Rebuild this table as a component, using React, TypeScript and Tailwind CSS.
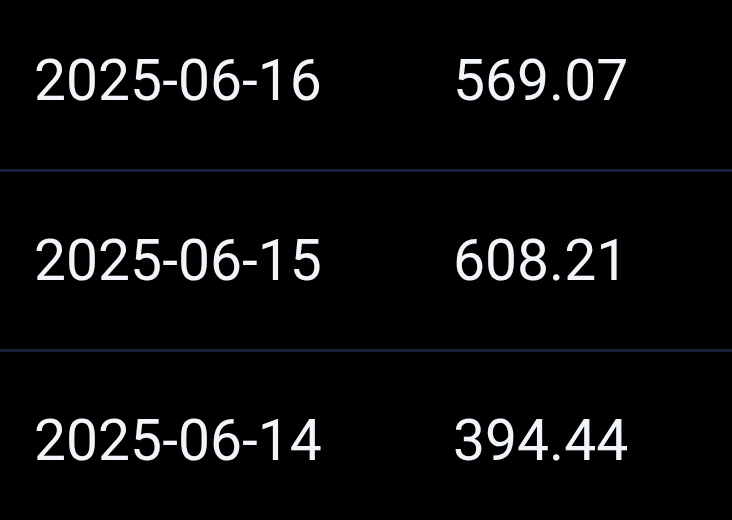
const ROWS = [
  { date: '2025-06-16', value: '569.07' },
  { date: '2025-06-15', value: '608.21' },
  { date: '2025-06-14', value: '394.44' },
]

export default function App() {
  return (
    <div className="h-[520px] w-[732px] overflow-hidden bg-black font-['Roboto',sans-serif] text-[#f1f5f9]">
      <div className="-mt-2">
        {ROWS.map((row) => (
          <div
            key={row.date}
            className="grid h-[180px] grid-cols-[419px_1fr] items-center border-b-[3px] border-[#181f38] pl-[34px] text-[57px] leading-none"
          >
            <span>{row.date}</span>
            <span>{row.value}</span>
          </div>
        ))}
      </div>
    </div>
  )
}
